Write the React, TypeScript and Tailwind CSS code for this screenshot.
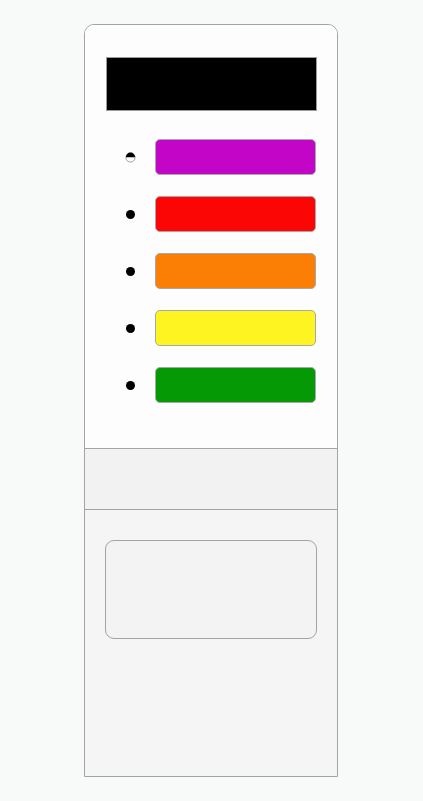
const bars = [
  { color: "bg-[#c305c8]", half: true },
  { color: "bg-[#fb0505]", half: false },
  { color: "bg-[#fc7f05]", half: false },
  { color: "bg-[#fdf422]", half: false },
  { color: "bg-[#059a05]", half: false },
];

function Dot({ half }: { half: boolean }) {
  if (half) {
    return (
      <svg width="11" height="11" viewBox="0 0 11 11">
        <circle cx="5.5" cy="5.5" r="4.6" fill="#fff" stroke="#888" strokeWidth="0.8" />
        <path d="M0.9 5.2 A4.6 4.6 0 0 1 10.1 5.2 Z" fill="#000" />
      </svg>
    );
  }
  return <div className="h-[9px] w-[9px] rounded-full bg-black" />;
}

export default function App() {
  return (
    <div className="min-h-[801px] bg-[#f8f9f9] pt-6">
      <div className="ml-[84px] flex h-[753px] w-[254px] flex-col overflow-hidden rounded-t-[10px] border border-[#a3a3a3]">
        <div className="flex h-[423px] flex-col bg-[#fdfdfd] px-[21px] pt-[32px]">
          <div className="h-[54px] w-[211px] border border-[#9a9a9a] bg-black" />
          <div className="mt-[28px] flex flex-col gap-[21px]">
            {bars.map((b, i) => (
              <div key={i} className="flex h-[36px] items-center">
                <div className="flex w-[49px] justify-center">
                  <Dot half={b.half} />
                </div>
                <div className={`h-[36px] w-[162px] rounded-[5px] border border-[#a8a8a8] ${b.color}`} />
              </div>
            ))}
          </div>
        </div>
        <div className="h-[62px] border-y border-[#a3a3a3] bg-[#f2f2f2]" />
        <div className="flex-1 bg-[#f5f5f5] px-[20px] pt-[30px]">
          <div className="h-[99px] w-[212px] rounded-[9px] border border-[#a3a3a3] bg-[#f3f3f3]" />
        </div>
      </div>
    </div>
  );
}
